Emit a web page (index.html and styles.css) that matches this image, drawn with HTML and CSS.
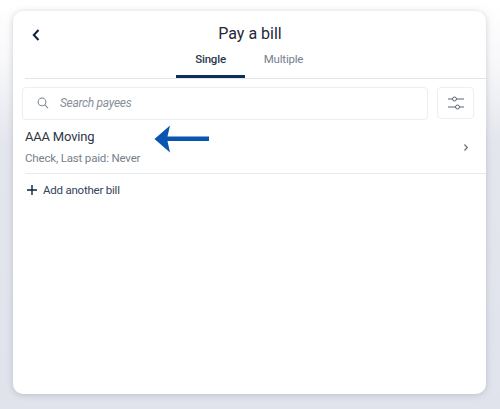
FILE: index.html
```html
<!DOCTYPE html>
<html lang="en">
<head>
<meta charset="utf-8">
<title>Pay a bill</title>
<link rel="stylesheet" href="styles.css">
</head>
<body>
<main class="card">
  <header class="head">
    <svg class="back" width="10" height="14" viewBox="0 0 10 14"><path d="M7.500 2 L2.800 7 L7.500 12" fill="none" stroke="#0b2340" stroke-width="2"/></svg>
    <h1 class="title">Pay a bill</h1>
  </header>
  <nav class="tabs">
    <span class="tab tab-active">Single</span>
    <span class="tab tab-multi">Multiple</span>
  </nav>
  <div class="searchrow">
    <div class="search">
      <svg width="12" height="12" viewBox="0 0 13 13"><circle cx="5.400" cy="5.400" r="4.200" fill="none" stroke="#78808c" stroke-width="1.100"/><path d="M8.400 8.400 L12 12" stroke="#78808c" stroke-width="1.100"/></svg>
      <span class="placeholder">Search payees</span>
    </div>
    <div class="filter">
      <svg width="18" height="14" viewBox="0 0 18 14"><g fill="none" stroke="#5a6472" stroke-width="1"><path d="M1 3 H5.500 M9.500 3 H17"/><circle cx="7.500" cy="3" r="2"/><path d="M1 11 H8.500 M12.500 11 H17"/><circle cx="10.500" cy="11" r="2"/></g></svg>
    </div>
  </div>
  <section class="payee">
    <div class="payee-main">
      <div class="payee-name">AAA Moving</div>
      <div class="payee-sub">Check, Last paid: Never</div>
    </div>
    <svg class="chev" width="6" height="9" viewBox="0 0 6 9"><path d="M1.500 1.500 L4.300 4.500 L1.500 7.500" fill="none" stroke="#646e7c" stroke-width="1.200"/></svg>
    <svg class="arrow" width="56" height="28" viewBox="0 0 56 28"><path d="M0.500 14 L16 0.500 L13.500 11.500 H55 V16 H13.500 L16 27.500 Z" fill="#0a55b0"/></svg>
  </section>
  <div class="add">
    <svg width="12" height="12" viewBox="0 0 12 12"><path d="M6 1 V11 M1 6 H11" stroke="#0b2340" stroke-width="1.400"/></svg>
    <span>Add another bill</span>
  </div>
</main>
</body>
</html>
```
FILE: styles.css
```css
* { box-sizing: border-box; }
html, body { margin: 0; height: 100%; }
body {
  width: 500px;
  height: 409px;
  overflow: hidden;
  padding: 11px 14px 15px 13px;
  background: linear-gradient(180deg, #ffffff 0%, #f8f8fa 15%, #e4e6ed 35%, #e0e3ec 100%);
  font-family: Roboto, "Liberation Sans", sans-serif;
}
.card {
  height: 383px;
  background: #fff;
  border-radius: 10px;
  box-shadow: 0 1px 6px rgba(120, 125, 140, 0.35);
  display: flex;
  flex-direction: column;
}
.head {
  position: relative;
  height: 40px;
  padding: 12px 0 0 1px;
  text-align: center;
}
.back { position: absolute; left: 18px; top: 17px; }
.title {
  margin: 0;
  font-size: 16px;
  line-height: 22px;
  font-weight: 400;
  color: #1f2738;
}
.tabs {
  height: 28px;
  margin-left: 12px;
  padding-left: 151px;
  display: flex;
  align-items: flex-start;
  border-bottom: 1px solid #e3e4e8;
}
.tab {
  width: 69px;
  height: 27px;
  font-size: 11.500px;
  letter-spacing: -0.200px;
  line-height: 16px;
  font-weight: 500;
  color: #76808f;
  text-align: center;
}
.tab-multi {
  width: 77px;
  font-weight: 400;
}
.tab-active {
  color: #2b3950;
  border-bottom: 3px solid #0b2f5b;
}
.searchrow {
  display: flex;
  gap: 9px;
  margin: 8px 12px 0 9px;
}
.search {
  width: 406px;
  height: 33px;
  padding: 0 0 2px 14px;
  border: 1px solid #eceef1;
  border-radius: 4px;
  display: flex;
  align-items: center;
  gap: 11px;
}
.placeholder {
  font-size: 12px;
  letter-spacing: -0.300px;
  font-style: italic;
  color: #8a9099;
}
.filter {
  width: 37px;
  height: 32px;
  border: 1px solid #eceef1;
  border-radius: 4px;
  display: flex;
  align-items: center;
  justify-content: center;
}
.payee {
  position: relative;
  height: 54px;
  margin-left: 12px;
  padding-top: 9px;
  border-bottom: 1px solid #e8e9ec;
  display: flex;
  justify-content: space-between;
}
.payee-name {
  font-size: 13px;
  letter-spacing: -0.200px;
  line-height: 16px;
  color: #30363f;
}
.payee-sub {
  margin-top: 6px;
  font-size: 11.500px;
  letter-spacing: -0.170px;
  line-height: 15px;
  color: #767f8b;
}
.chev { margin: 14px 17px 0 0; }
.arrow { position: absolute; left: 129px; top: 5px; }
.add {
  display: flex;
  align-items: center;
  gap: 5px;
  margin: 8px 0 0 13px;
  font-size: 11.500px;
  letter-spacing: -0.220px;
  line-height: 16px;
  color: #34435a;
}
```
